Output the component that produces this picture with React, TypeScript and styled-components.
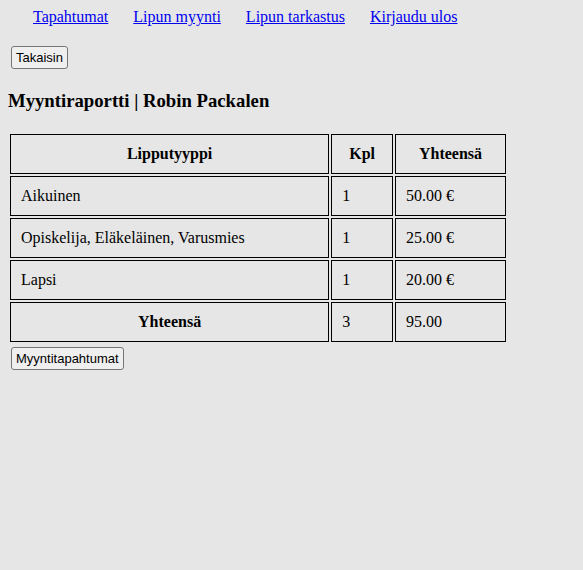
import React from "react";
import styled, { createGlobalStyle } from "styled-components";

const Global = createGlobalStyle`
  html, body { background: #e6e6e6; }
  body {
    margin: 8px;
    font-family: "Liberation Serif", "Times New Roman", serif;
    font-size: 16px;
    color: #000;
  }
`;

const Nav = styled.ul`
  list-style: none;
  display: flex;
  gap: 25px;
  margin: 0 0 17px;
  padding: 0 0 0 25px;
  line-height: 18px;
`;

const NavLink = styled.a`
  color: #0000ee;
  text-decoration: underline;
`;

const Button = styled.button`
  display: inline-block;
  margin: 3px;
  padding: 2px 4px;
  font-family: "Liberation Sans", Arial, sans-serif;
  font-size: 13px;
  line-height: 17px;
  color: #000;
  background: #efefef;
  border: 1px solid #767676;
  border-radius: 3px;
`;

const Heading = styled.h3`
  font-size: 18.72px;
  font-weight: bold;
  margin: 18px 0 20px;
  line-height: 22px;
`;

const Table = styled.table`
  border-collapse: separate;
  border-spacing: 2px;
  width: 500px;
`;

const Cell = styled.td<{ $w?: number; $head?: boolean }>`
  border: 1px solid #000;
  padding: 10px;
  line-height: 18px;
  ${(p) => (p.$w ? `width: ${p.$w}px;` : "")}
  ${(p) => (p.$head ? "font-weight: bold; text-align: center;" : "text-align: left;")}
`;

const rows = [
  ["Aikuinen", "1", "50.00 €"],
  ["Opiskelija, Eläkeläinen, Varusmies", "1", "25.00 €"],
  ["Lapsi", "1", "20.00 €"],
];

export default function App() {
  return (
    <>
      <Global />
      <Nav>
        <li><NavLink href="#">Tapahtumat</NavLink></li>
        <li><NavLink href="#">Lipun myynti</NavLink></li>
        <li><NavLink href="#">Lipun tarkastus</NavLink></li>
        <li><NavLink href="#">Kirjaudu ulos</NavLink></li>
      </Nav>
      <Button>Takaisin</Button>
      <Heading>Myyntiraportti | Robin Packalen</Heading>
      <Table>
        <thead>
          <tr>
            <Cell as="th" $head $w={298}>Lipputyyppi</Cell>
            <Cell as="th" $head $w={40}>Kpl</Cell>
            <Cell as="th" $head $w={89}>Yhteensä</Cell>
          </tr>
        </thead>
        <tbody>
          {rows.map((r) => (
            <tr key={r[0]}>
              <Cell>{r[0]}</Cell>
              <Cell>{r[1]}</Cell>
              <Cell>{r[2]}</Cell>
            </tr>
          ))}
          <tr>
            <Cell $head>Yhteensä</Cell>
            <Cell>3</Cell>
            <Cell>95.00</Cell>
          </tr>
        </tbody>
      </Table>
      <Button>Myyntitapahtumat</Button>
    </>
  );
}
